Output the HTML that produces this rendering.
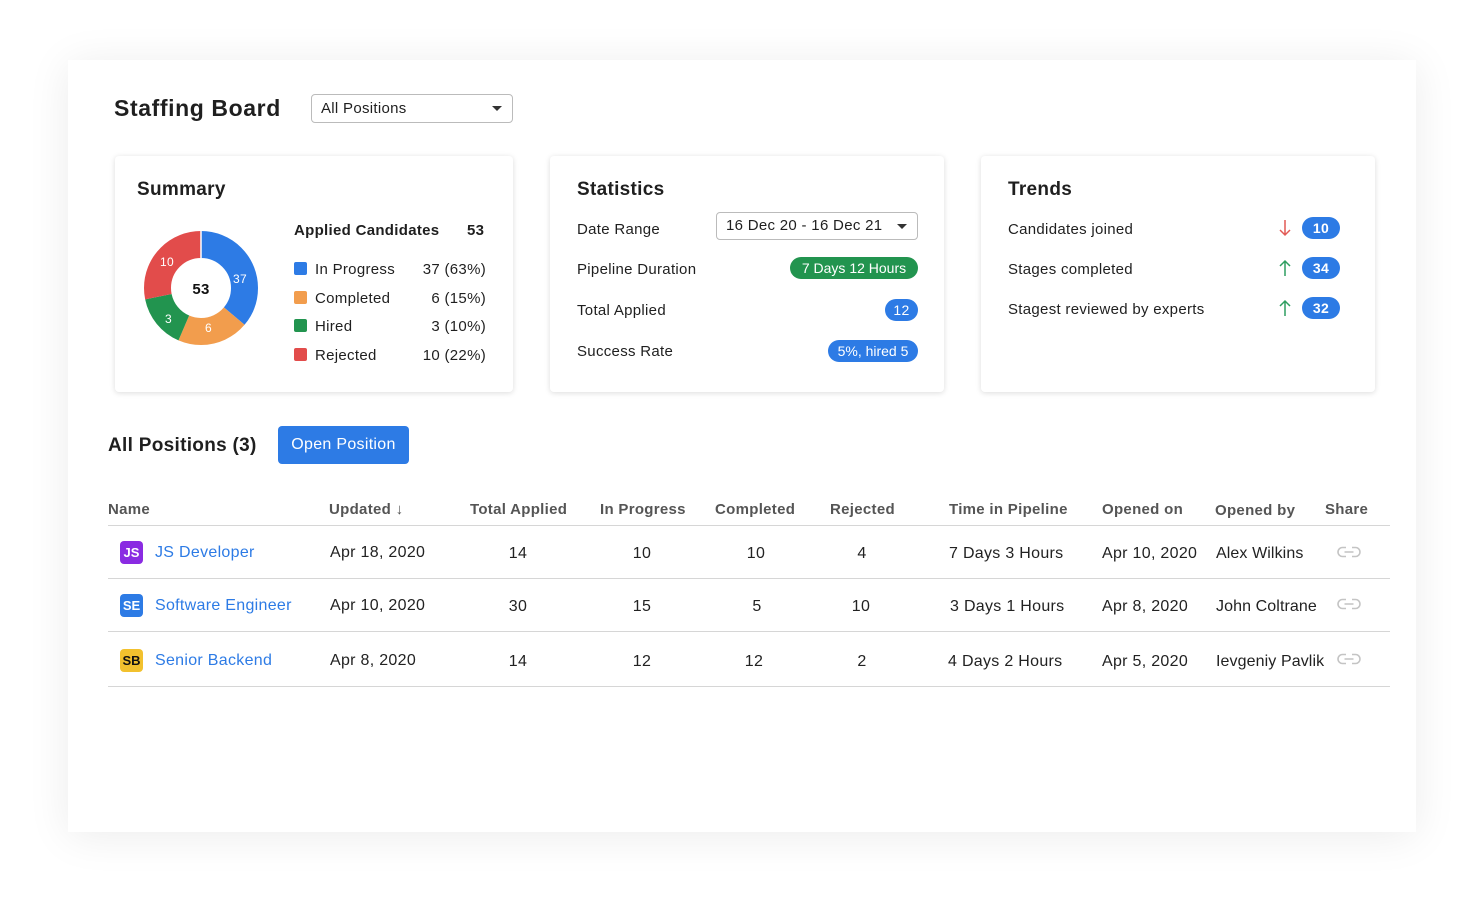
<!DOCTYPE html><html><head><style>
*{box-sizing:border-box;margin:0;padding:0}
body{width:1484px;height:908px;background:#fff;font-family:"Liberation Sans",sans-serif;color:#1f1f1f;position:relative;overflow:hidden;letter-spacing:0.3px}
.a{position:absolute;white-space:nowrap}
.main{position:absolute;left:68px;top:60px;width:1348px;height:772px;background:#fff;box-shadow:0 4px 40px rgba(0,0,0,0.08)}
.card{position:absolute;background:#fff;border-radius:4px;box-shadow:0 1px 6px rgba(0,0,0,0.14)}
.h2{font-size:19px;font-weight:bold}
.t15{font-size:15px}
.pill{position:absolute;height:22px;border-radius:11px;color:#fff;font-size:14px;line-height:22px;text-align:center;padding:0 9px}
.blue{background:#2d7be5}
.sq{display:inline-block;width:13px;height:13px;border-radius:2px;position:absolute}
.th{font-size:15px;color:#555;font-weight:bold;position:absolute;top:501px}
.line{position:absolute;left:108px;width:1282px;height:1px;background:#d6d6d6}
.td{position:absolute;font-size:16px;color:#222}
.c{transform:translateX(-50%)}
.ic{position:absolute;width:23px;height:23px;border-radius:4px;font-size:13px;font-weight:bold;text-align:center;line-height:23px;left:120px;letter-spacing:0}
.nm{position:absolute;left:155px;font-size:16px;color:#2d7be5}
</style></head><body>
<div class="main"></div>
<div class="a" style="left:114px;top:95px;font-size:23px;font-weight:bold;letter-spacing:0.6px">Staffing Board</div>
<div class="a" style="left:311px;top:94px;width:202px;height:29px;border:1px solid #bbb;border-radius:4px;font-size:15px;line-height:27px;padding-left:9px">All Positions<span style="position:absolute;right:10px;top:11px;border-left:5px solid transparent;border-right:5px solid transparent;border-top:5px solid #333"></span></div>

<div class="card" style="left:115px;top:156px;width:398px;height:236px"></div>
<div class="a h2" style="left:137px;top:179px">Summary</div>
<svg class="a" style="left:144px;top:231px" width="114" height="114" viewBox="0 0 114 114">
<g transform="rotate(-90 57 57)" fill="none" stroke-width="27">
<circle cx="57" cy="57" r="43.5" stroke="#2d7be5" stroke-dasharray="98.7 300"/>
<circle cx="57" cy="57" r="43.5" stroke="#f29d4d" stroke-dasharray="0 98.7 55.4 300"/>
<circle cx="57" cy="57" r="43.5" stroke="#22944f" stroke-dasharray="0 154.1 41.8 300"/>
<circle cx="57" cy="57" r="43.5" stroke="#e24c4b" stroke-dasharray="0 195.9 77.4 300"/>
</g>
<g stroke="#fff" stroke-width="1.5"><line x1="57" y1="0" x2="57" y2="27"/></g>
<g fill="#fff" font-size="12" font-family="Liberation Sans"><text x="89" y="52">37</text><text x="61" y="101">6</text><text x="21" y="92">3</text><text x="16" y="35">10</text></g>
<text x="57" y="63" text-anchor="middle" font-size="15" font-weight="bold" fill="#111" font-family="Liberation Sans">53</text>
</svg>
<div class="a t15" style="left:294px;top:222px;font-weight:bold">Applied Candidates</div>
<div class="a t15" style="left:467px;top:222px;font-weight:bold">53</div>
<span class="sq" style="left:294px;top:262px;background:#2d7be5"></span><div class="a t15" style="left:315px;top:261px">In Progress</div><div class="a t15" style="right:998px;top:261px">37 (63%)</div>
<span class="sq" style="left:294px;top:291px;background:#f29d4d"></span><div class="a t15" style="left:315px;top:290px">Completed</div><div class="a t15" style="right:998px;top:290px">6 (15%)</div>
<span class="sq" style="left:294px;top:319px;background:#22944f"></span><div class="a t15" style="left:315px;top:318px">Hired</div><div class="a t15" style="right:998px;top:318px">3 (10%)</div>
<span class="sq" style="left:294px;top:348px;background:#e24c4b"></span><div class="a t15" style="left:315px;top:347px">Rejected</div><div class="a t15" style="right:998px;top:347px">10 (22%)</div>

<div class="card" style="left:550px;top:156px;width:394px;height:236px"></div>
<div class="a h2" style="left:577px;top:179px">Statistics</div>
<div class="a t15" style="left:577px;top:221px">Date Range</div>
<div class="a" style="left:716px;top:212px;width:202px;height:28px;border:1px solid #bbb;border-radius:4px;font-size:15px;line-height:26px;padding-left:9px">16 Dec 20 - 16 Dec 21<span style="position:absolute;right:10px;top:11px;border-left:5px solid transparent;border-right:5px solid transparent;border-top:5px solid #333"></span></div>
<div class="a t15" style="left:577px;top:261px">Pipeline Duration</div>
<div class="pill" style="left:790px;top:257px;width:128px;background:#22944f;padding:0;letter-spacing:0">7 Days 12 Hours</div>
<div class="a t15" style="left:577px;top:302px">Total Applied</div>
<div class="pill blue" style="left:885px;top:299px;width:33px;padding:0">12</div>
<div class="a t15" style="left:577px;top:343px">Success Rate</div>
<div class="pill blue" style="left:828px;top:340px;width:90px;padding:0;letter-spacing:0">5%, hired 5</div>

<div class="card" style="left:981px;top:156px;width:394px;height:236px"></div>
<div class="a h2" style="left:1008px;top:179px">Trends</div>
<div class="a t15" style="left:1008px;top:221px">Candidates joined</div>
<div class="a t15" style="left:1008px;top:261px">Stages completed</div>
<div class="a t15" style="left:1008px;top:301px">Stagest reviewed by experts</div>
<svg class="a" style="left:1279px;top:219px" width="12" height="18" viewBox="0 0 12 18"><path d="M6 1v15M1 11l5 5 5-5" fill="none" stroke="#e25a55" stroke-width="1.5"/></svg>
<svg class="a" style="left:1279px;top:259px" width="12" height="18" viewBox="0 0 12 18"><path d="M6 17V2M1 7l5-5 5 5" fill="none" stroke="#2e9e60" stroke-width="1.5"/></svg>
<svg class="a" style="left:1279px;top:299px" width="12" height="18" viewBox="0 0 12 18"><path d="M6 17V2M1 7l5-5 5 5" fill="none" stroke="#2e9e60" stroke-width="1.5"/></svg>
<div class="pill blue" style="left:1302px;top:217px;width:38px;padding:0;font-weight:bold">10</div>
<div class="pill blue" style="left:1302px;top:257px;width:38px;padding:0;font-weight:bold">34</div>
<div class="pill blue" style="left:1302px;top:297px;width:38px;padding:0;font-weight:bold">32</div>

<div class="a" style="left:108px;top:435px;font-size:19px;font-weight:bold">All Positions (3)</div>
<div class="a" style="left:278px;top:426px;width:131px;height:38px;background:#2d7be5;border-radius:4px;color:#fff;font-size:16px;line-height:38px;text-align:center">Open Position</div>

<div class="th" style="left:108px">Name</div>
<div class="th" style="left:329px">Updated ↓</div>
<div class="th" style="left:470px">Total Applied</div>
<div class="th" style="left:600px">In Progress</div>
<div class="th" style="left:715px">Completed</div>
<div class="th" style="left:830px">Rejected</div>
<div class="th" style="left:949px">Time in Pipeline</div>
<div class="th" style="left:1102px">Opened on</div>
<div class="th" style="left:1215px;top:502px">Opened by</div>
<div class="th" style="left:1325px">Share</div>
<div class="line" style="top:525px"></div>
<div class="line" style="top:578px"></div>
<div class="line" style="top:631px"></div>
<div class="line" style="top:686px"></div>

<div class="ic" style="top:541px;background:#8a2be2;color:#fff">JS</div><div class="nm" style="top:544px">JS Developer</div>
<div class="ic" style="top:594px;background:#2d7be5;color:#fff">SE</div><div class="nm" style="top:597px">Software Engineer</div>
<div class="ic" style="top:649px;background:#f2c12e;color:#111">SB</div><div class="nm" style="top:652px">Senior Backend</div>

<div class="td" style="left:330px;top:544px">Apr 18, 2020</div>
<div class="td" style="left:330px;top:597px">Apr 10, 2020</div>
<div class="td" style="left:330px;top:652px">Apr 8, 2020</div>
<div class="td c" style="left:518px;top:545px">14</div><div class="td c" style="left:642px;top:545px">10</div><div class="td c" style="left:756px;top:545px">10</div><div class="td c" style="left:862px;top:545px">4</div>
<div class="td c" style="left:518px;top:598px">30</div><div class="td c" style="left:642px;top:598px">15</div><div class="td c" style="left:757px;top:598px">5</div><div class="td c" style="left:861px;top:598px">10</div>
<div class="td c" style="left:518px;top:653px">14</div><div class="td c" style="left:642px;top:653px">12</div><div class="td c" style="left:754px;top:653px">12</div><div class="td c" style="left:862px;top:653px">2</div>
<div class="td" style="left:949px;top:545px">7 Days 3 Hours</div>
<div class="td" style="left:950px;top:598px">3 Days 1 Hours</div>
<div class="td" style="left:948px;top:653px">4 Days 2 Hours</div>
<div class="td" style="left:1102px;top:545px">Apr 10, 2020</div>
<div class="td" style="left:1102px;top:598px">Apr 8, 2020</div>
<div class="td" style="left:1102px;top:653px">Apr 5, 2020</div>
<div class="td" style="left:1216px;top:545px;letter-spacing:0.1px">Alex Wilkins</div>
<div class="td" style="left:1216px;top:598px;letter-spacing:0.1px">John Coltrane</div>
<div class="td" style="left:1216px;top:653px;letter-spacing:0.1px">Ievgeniy Pavlik</div>
<svg class="a" style="left:1337px;top:546px" width="24" height="12" viewBox="0 0 24 12"><g fill="none" stroke="#c4c4c4" stroke-width="1.6"><path d="M9 1.5H5.5a4.5 4.5 0 0 0 0 9H9M15 1.5h3.5a4.5 4.5 0 0 1 0 9H15M7.5 6h9"/></g></svg>
<svg class="a" style="left:1337px;top:598px" width="24" height="12" viewBox="0 0 24 12"><g fill="none" stroke="#c4c4c4" stroke-width="1.6"><path d="M9 1.5H5.5a4.5 4.5 0 0 0 0 9H9M15 1.5h3.5a4.5 4.5 0 0 1 0 9H15M7.5 6h9"/></g></svg>
<svg class="a" style="left:1337px;top:653px" width="24" height="12" viewBox="0 0 24 12"><g fill="none" stroke="#c4c4c4" stroke-width="1.6"><path d="M9 1.5H5.5a4.5 4.5 0 0 0 0 9H9M15 1.5h3.5a4.5 4.5 0 0 1 0 9H15M7.5 6h9"/></g></svg>
</body></html>
